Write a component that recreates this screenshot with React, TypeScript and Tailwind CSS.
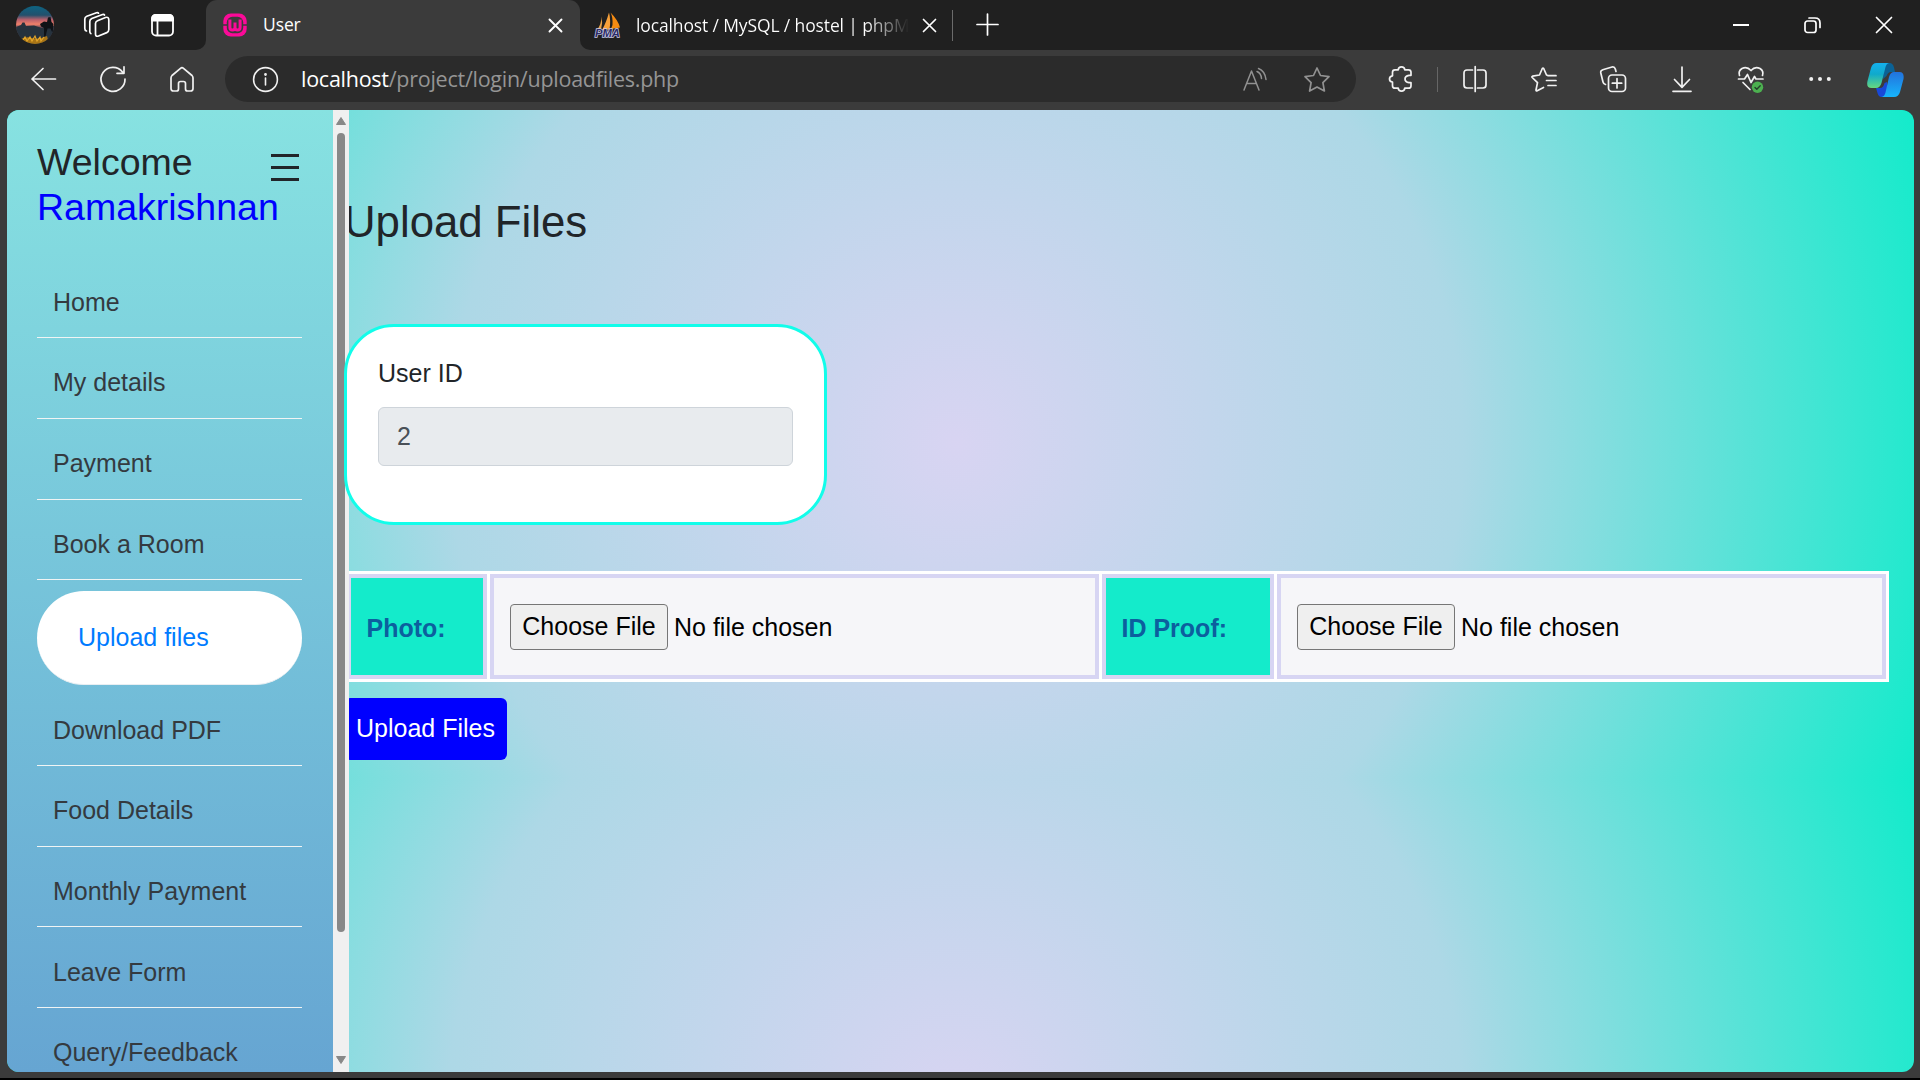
import type { ReactNode } from "react";

function Icon({ w = 26, h = 26, children, sw = 1.7, className = "" }: { w?: number; h?: number; children: ReactNode; sw?: number; className?: string }) {
  return (
    <svg
      width={w}
      height={h}
      viewBox={`0 0 ${w} ${h}`}
      fill="none"
      stroke="currentColor"
      strokeWidth={sw}
      strokeLinecap="round"
      strokeLinejoin="round"
      className={`shrink-0 overflow-visible ${className}`}
    >
      {children}
    </svg>
  );
}

function Slot({ children }: { children: ReactNode }) {
  return <button className="flex h-full w-[69px] shrink-0 items-center justify-center">{children}</button>;
}

function Avatar() {
  return (
    <svg width="38" height="38" viewBox="0 0 38 38" className="shrink-0">
      <defs>
        <clipPath id="avatarClip"><circle cx="19" cy="19" r="19" /></clipPath>
        <linearGradient id="sky" x1="0" y1="0" x2="0" y2="1">
          <stop offset="0" stopColor="#0d6482" />
          <stop offset="0.24" stopColor="#23506c" />
          <stop offset="0.36" stopColor="#b8606c" />
          <stop offset="0.48" stopColor="#f0806a" />
          <stop offset="0.58" stopColor="#5a4456" />
          <stop offset="1" stopColor="#1e2a34" />
        </linearGradient>
      </defs>
      <g clipPath="url(#avatarClip)">
        <rect width="38" height="38" fill="url(#sky)" />
        <path d="M0 21 L5 19 L6.500 16.500 L8.500 16.500 L10 20 L18 19.500 L26 22 L38 20 V38 H0Z" fill="#26323d" />
        <path d="M24 18 L28 15.500 L31 16 L32 11.500 L34.500 11 L35.500 16 L37.500 18 L36.500 27 L34.500 22.500 L31.500 22.500 L29.500 30.500 L28 30.500 L28 22 L25 20.500Z" fill="#0f1216" />
        <path d="M4 33.500 Q10 30 16 32 T31 30 L33 38 H4Z" fill="#a87416" />
        <path d="M7 34 l2 -3 l2 4 l3 -4 l2 4 l3 -5 l2 5 l3 -4 l1 4 l3 -4" stroke="#e2a52a" strokeWidth="1.2" fill="none" />
      </g>
    </svg>
  );
}

function WampLogo() {
  return (
    <svg width="24" height="24" viewBox="0 0 24 24" className="shrink-0">
      <rect x="0.300" y="0.500" width="23.400" height="23" rx="7.500" fill="#fb0a98" />
      <rect x="3.800" y="3.800" width="16.400" height="16.400" rx="5.500" fill="#3b3b3b" />
      <path d="M0 12h4.500M19.500 12h4.500" stroke="#3b3b3b" strokeWidth="1.500" />
      <path d="M6.900 6.500v8a2.500 2.500 0 0 0 5.100 0V9.500v5a2.500 2.500 0 0 0 5.100 0v-8" fill="none" stroke="#fb0a98" strokeWidth="3" />
    </svg>
  );
}

function PmaLogo() {
  return (
    <svg width="26" height="26" viewBox="0 0 26 26" className="shrink-0 overflow-visible">
      <path d="M6.500 4.500 Q6.500 12 2 18 L6 17.500 Q8 11 6.500 4.500Z" fill="#e7a24a" />
      <path d="M14 0.500 Q11 11 7 18 L14.500 17.500 Q16 8 14 0.500Z" fill="#f8a13a" />
      <path d="M15.500 0.500 Q18 5 17.500 13 L16 17 L25 15.500 Q23 8 15.500 0.500Z" fill="#f58b12" />
      <text x="0" y="24.500" textLength="25" lengthAdjust="spacingAndGlyphs" fontFamily="Liberation Sans" fontWeight="bold" fontStyle="italic" fontSize="10" fill="#2c2c66" stroke="#c9c9e6" strokeWidth="1.300" paintOrder="stroke">PMA</text>
    </svg>
  );
}

function Copilot() {
  return (
    <svg width="37" height="34" viewBox="0 0 37 34" className="shrink-0">
      <defs>
        <linearGradient id="cpA" x1="0" y1="0" x2="0" y2="1">
          <stop offset="0" stopColor="#14b0ee" />
          <stop offset="0.45" stopColor="#10aacb" />
          <stop offset="1" stopColor="#66d77f" />
        </linearGradient>
        <linearGradient id="cpB" x1="0" y1="0" x2="0" y2="1">
          <stop offset="0" stopColor="#2272dd" />
          <stop offset="1" stopColor="#17b4fb" />
        </linearGradient>
      </defs>
      <path d="M17 0 H22.500 Q26 0 27 4.500 L28 9 H24 Q21 9 19.500 13 L16 16Z" fill="#0b6296" />
      <path d="M20 34 H14.500 Q11.500 34 10.500 30 L9 25 H13 Q16.500 25 17.500 20 L20 19Z" fill="#1848d8" />
      <path d="M9.500 0 H22 Q19.500 0.500 18.500 4 L14.500 20 Q13 25 9 25 H4.500 Q-1 25 0.500 18 L4 5 Q5.500 0 9.500 0Z" fill="url(#cpA)" />
      <path d="M27 34 H14.500 Q17.500 33.500 18.500 29.500 L22 14 Q23.500 9 27 9 H32.500 Q37.500 9 36.500 16 L33 29 Q31.500 34 27 34Z" fill="url(#cpB)" />
    </svg>
  );
}

function TabStrip() {
  return (
    <div className="flex h-[50px] shrink-0 bg-[#3b3b3b] text-white">
      <div className="flex w-[206px] shrink-0 items-center rounded-br-[10px] bg-[#202020] pl-4">
        <Avatar />
        <Icon className="ml-[30px]" w={26} h={26}>
          <path d="M11.500 11.500 Q11.500 9.500 13.500 8.700 L21.500 5.500 Q24.800 4.500 24.800 8 V17.500 Q24.800 19.800 22.800 20.600 L14.500 24 Q11.500 25 11.500 22Z" />
          <path d="M6.800 21.500 Q5.800 21 5.800 19.500 V9.500 Q5.800 7.500 7.800 6.500 L18.500 2.500 Q20 2 20.500 3" />
          <path d="M2.500 19 Q0.800 18.500 0.800 16.500 V7 Q0.800 5 2.800 4.200 L12.500 0.800 Q14 0.400 14.500 1.200" />
        </Icon>
        <Icon className="ml-[41px]" w={23} h={24} sw={1.8}>
          <rect x="1" y="2" width="21" height="20.500" rx="4" />
          <path d="M1 7.500 V6 Q1 2 5 2 H18 Q22 2 22 6 V7.500Z" fill="currentColor" />
          <path d="M6.500 8V22" />
        </Icon>
      </div>
      <div className="w-[374px] shrink-0 bg-linear-to-b from-[#202020] from-50% to-[#3b3b3b] to-50%">
        <div className="flex h-full items-center rounded-t-[11px] bg-[#3b3b3b] pl-[17px]">
          <WampLogo />
          <span className="ml-[16px] flex-1 font-['Open_Sans',sans-serif] text-[17.500px] leading-none tracking-[-0.1px]">User</span>
          <Icon className="mr-[18px]" w={13} h={13} sw={1.9}><path d="M0.500 0.500 12.500 12.500M12.500 0.500 0.500 12.500" /></Icon>
        </div>
      </div>
      <div className="flex flex-1 items-center rounded-bl-[10px] bg-[#202020] pl-[15px]">
        <PmaLogo />
        <span className="ml-[15px] w-[273px] whitespace-nowrap bg-linear-to-r from-white from-84% to-transparent bg-clip-text font-['Open_Sans',sans-serif] text-[17.500px] leading-[28px] tracking-[-0.13px] text-transparent">
          localhost / MySQL / hostel | phpM
        </span>
        <Icon className="ml-[14px]" w={13} h={13} sw={1.7}><path d="M0.500 0.500 12.500 12.500M12.500 0.500 0.500 12.500" /></Icon>
        <div className="ml-4 h-[31px] w-px bg-[#6b6b6b]" />
        <Icon className="ml-6 -mt-[2px]" w={21} h={21} sw={1.700}><path d="M10.500 0V21M0 10.500H21" /></Icon>
        <div className="ml-auto flex items-center pr-[28px]">
          <div className="h-[2px] w-4 bg-white" />
          <Icon className="ml-[55px]" w={17} h={16} sw={1.700}>
            <rect x="1" y="4" width="11" height="11.500" rx="2.500" />
            <path d="M5 1 H11 Q16 1 16 6 V10.500" />
          </Icon>
          <Icon className="ml-[55px]" w={16} h={16} sw={1.700}><path d="M0.500 0.500 15.500 15.500M15.500 0.500 0.500 15.500" /></Icon>
        </div>
      </div>
    </div>
  );
}

function Toolbar() {
  return (
    <div className="flex h-[60px] shrink-0 items-center bg-[#3b3b3b] pb-[2px] pl-[9px] text-[#f1f1f1]">
      <Slot><Icon w={25} h={22}><path d="M24.500 11H1M12 0.500 1 11 12 21.500" /></Icon></Slot>
      <Slot><Icon w={26} h={26}><path d="M22.500 6 A12 12 0 1 0 25 13M24 0.800V7.300H17" /></Icon></Slot>
      <Slot><Icon w={24} h={25}><path d="M1 11 Q1 9.500 2 8.500 L10.500 1.300 Q12 0 13.500 1.300 L22 8.500 Q23 9.500 23 11 V21.500 Q23 24 20.500 24 H17.500 Q15.500 24 15.500 22 V16.500 Q15.500 14.500 13.500 14.500 H10.500 Q8.500 14.500 8.500 16.500 V22 Q8.500 24 6.500 24 H3.500 Q1 24 1 21.500Z" /></Icon></Slot>
      <div className="ml-[9px] flex h-[46px] w-[1131px] shrink-0 items-center rounded-full bg-[#2b2b2b] pl-[28px] pr-[26px]">
        <Icon w={25} h={25} sw={1.600}><circle cx="12.500" cy="12.500" r="11.900" /><path d="M12.500 11V18" /><circle cx="12.500" cy="7.500" r="0.600" fill="currentColor" /></Icon>
        <span className="ml-[23px] flex-1 whitespace-nowrap font-['Open_Sans',sans-serif] text-[21.500px] leading-none tracking-[-0.26px] text-[#959595]">
          <span className="text-white">localhost</span>/project/login/uploadfiles.php
        </span>
        <Icon className="text-[#919191]" w={25} h={23} sw={1.500}>
          <path d="M2 22 9.500 3 17 22M4.800 15.500H14.200M15 3.500Q19 5 19.500 10.500M16.500 0.500Q23 3 24 11.500" />
        </Icon>
        <Icon className="ml-[37px] text-[#919191]" w={26} h={25}>
          <path d="M13 1 L16.500 8.500 L25 9.700 L18.900 15.700 L20.400 24 L13 20 L5.600 24 L7.100 15.700 L1 9.700 L9.500 8.500Z" />
        </Icon>
      </div>
      <div className="ml-[10px] flex h-full items-center">
        <Slot><Icon w={24} h={26}><path d="M6 3.800H9.200Q9.500 0.800 12.500 0.800Q15.500 0.800 15.800 3.800H19.500Q22 3.800 22 6.300V9.300H20Q16 10 16 13Q16 16 20 16.700H22V19.700Q22 22.200 19.500 22.200H15.800Q15.500 25.200 12.500 25.200Q9.500 25.200 9.200 22.200H6Q3.500 22.200 3.500 19.700V16.200Q0.500 15.800 0.500 13Q0.500 10.200 3.500 9.800V6.300Q3.500 3.800 6 3.800Z" /></Icon></Slot>
        <div className="mx-[2px] h-[25px] w-px bg-[#666]" />
        <Slot><Icon w={24} h={26}><path d="M9.500 4H4Q1 4 1 7V19Q1 22 4 22H9.500M14.500 4H20Q23 4 23 7V19Q23 22 20 22H14.500M12.200 0.500V25.500" /></Icon></Slot>
        <Slot><Icon w={26} h={25}><path d="M17 8.500 15.500 8 12.700 1.500 Q12 0.500 11.300 1.500 L8.500 8 L1.500 9.200 Q0.500 9.600 1.200 10.500 L6.500 15.700 L5 23 Q5 24.300 6.200 23.800 L12.500 20.500M17 8.700H25M15.500 13.500H25M17 18.500H25" /></Icon></Slot>
        <Slot><Icon w={26} h={26}><rect x="8.500" y="9" width="17" height="16.500" rx="3.500" /><path d="M17 12.500V22M12.300 17.200H21.700M5.500 18.500Q3.500 18 3 16L0.800 7Q0.300 4.500 2.800 3.700L12 1Q14.500 0.500 15.300 3L16 5.500" /></Icon></Slot>
        <Slot><Icon w={20} h={26}><path d="M10 1V21M2.500 13.500 10 21.300 17.500 13.500M1 25.300H19" /></Icon></Slot>
        <Slot>
          <Icon w={26} h={26}>
            <path d="M1.500 9.500 Q0 5 4 2.500 Q9 0 13 4.500 Q17 0 22 2.500 Q26 5 24.500 9.500M0.500 13H6.500L9.500 8.500 13 16.500 16.500 10.500 18 13H25M5 16.500 12 23.500" />
            <circle cx="19.500" cy="21.300" r="5.700" fill="#4cb050" stroke="none" />
            <path d="M17 21.500 18.800 23.300 22.200 19.800" stroke="#24402a" strokeWidth="1.400" />
          </Icon>
        </Slot>
        <Slot><Icon w={22} h={4}><g fill="currentColor" stroke="none"><circle cx="2.200" cy="2" r="2" /><circle cx="11" cy="2" r="2" /><circle cx="19.800" cy="2" r="2" /></g></Icon></Slot>
        <div className="ml-[13px] pt-[2px]"><Copilot /></div>
      </div>
    </div>
  );
}

const before = ["Home", "My details", "Payment", "Book a Room"];
const after = ["Download PDF", "Food Details", "Monthly Payment", "Leave Form", "Query/Feedback"];

function NavItem({ label }: { label: string }) {
  return (
    <li className="flex h-[80.7px] items-end border-b border-[#f0f4f4] pb-[16px] pl-[16px] text-[#343a40]">
      <a className="leading-[37.5px]">{label}</a>
    </li>
  );
}

function Sidebar() {
  return (
    <aside className="relative z-10 flex w-[342px] shrink-0">
      <div className="h-full w-[326px] overflow-hidden bg-linear-to-b from-[#87e2e1] to-[#66a5d2] pr-[31px] pl-[30px]">
        <div className="flex h-[147.6px] justify-between pt-[30px]">
          <h4 className="text-[37.5px] leading-[45px] text-[#212529]">
            Welcome<br /><span className="text-[#0000ff]">Ramakrishnan</span>
          </h4>
          <div className="mt-[14px] mr-[3px] -ml-4 flex h-[27px] w-[28px] shrink-0 flex-col justify-between">
            <i className="h-[3px] bg-[#212529]" /><i className="h-[3px] bg-[#212529]" /><i className="h-[3px] bg-[#212529]" />
          </div>
        </div>
        <ul>
          {before.map((l) => <NavItem key={l} label={l} />)}
          <li className="mt-[11px] flex h-[94px] items-center rounded-[47px] border-b border-[#e8eef2] bg-white pl-[41px] text-[#007bff]">
            <a>Upload files</a>
          </li>
          {after.map((l) => <NavItem key={l} label={l} />)}
        </ul>
      </div>
      <div className="flex w-4 flex-col items-center bg-[#f0f0f0] pt-[7px] pb-[8px]">
        <svg width="10" height="8" viewBox="0 0 10 8" className="shrink-0"><path d="M5 0.500 9.500 7.500H0.500Z" fill="#888" stroke="#888" strokeLinejoin="round" /></svg>
        <div className="mt-2 h-[799px] w-[8px] shrink-0 rounded-full bg-[#888]" />
        <svg width="10" height="8" viewBox="0 0 10 8" className="mt-auto shrink-0"><path d="M5 7.500 9.500 0.500H0.500Z" fill="#888" stroke="#888" strokeLinejoin="round" /></svg>
      </div>
    </aside>
  );
}

function FileCell() {
  return (
    <div className="flex items-center border-4 border-[#d7d5f3] bg-[#f6f6f9] pl-[16px] text-black">
      <button className="h-[46px] w-[158px] rounded-[4px] border border-[#767676] bg-[#efefef] pt-px">Choose File</button>
      <span className="ml-[6px] pt-[2px]">No file chosen</span>
    </div>
  );
}

function LabelCell({ children }: { children: ReactNode }) {
  return <div className="flex items-center border-4 border-[#d7d5f3] bg-[#14ebcb] pt-[4px] pl-[15.500px] font-bold text-[#0c5f9e]">{children}</div>;
}

function Main() {
  return (
    <main className="-ml-[5px] flex-1 pr-[25px]">
      <h3 className="pt-[86px] text-[43.75px] leading-[52.500px] text-[#212529]">Upload Files</h3>
      <section className="relative z-20 mt-[75.500px] h-[201px] w-[483px] rounded-[50px] border-[3px] border-[#12fdea] bg-white px-[31px] pt-[28px]">
        <label className="block leading-[37.500px] text-[#212529]">User ID</label>
        <div className="mt-[14.500px] flex h-[59px] items-center rounded-[6px] border border-[#ced4da] bg-[#e8ebee] pl-[18px] text-[#495057]">2</div>
      </section>
      <section className="mt-[46px] grid h-[111px] grid-cols-[140px_609px_172px_609px] gap-[3px] bg-white p-[3px]">
        <LabelCell>Photo:</LabelCell>
        <FileCell />
        <LabelCell>ID Proof:</LabelCell>
        <FileCell />
      </section>
      <button className="mt-4 flex h-[62px] w-[163px] items-center justify-center rounded-[6px] bg-[#0000ff] pb-px text-white">Upload Files</button>
    </main>
  );
}

export default function App() {
  return (
    <div className="flex h-[1080px] w-[1920px] flex-col overflow-hidden border-b-2 border-black bg-[#3b3b3b]">
      <TabStrip />
      <Toolbar />
      <div className="mr-[6px] mb-[6px] ml-[7px] flex flex-1 overflow-hidden rounded-[12px] bg-[radial-gradient(circle_at_949px_50%,#d8d4f2,#add8e6,#13ebcb)] bg-[length:100%_668px] font-['Liberation_Sans',Arial,sans-serif] text-[25px] leading-[37.500px]">
        <Sidebar />
        <Main />
      </div>
    </div>
  );
}
